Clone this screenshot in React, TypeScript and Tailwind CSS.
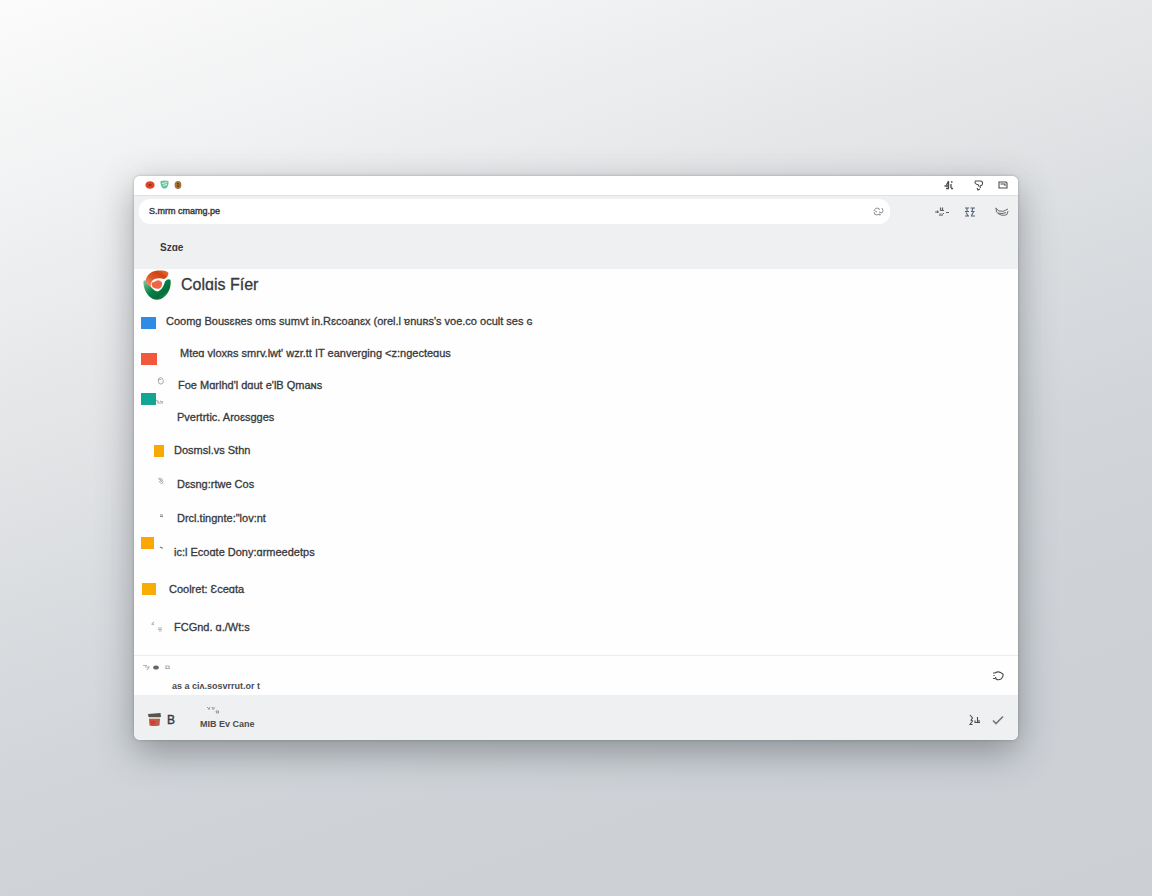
import { type ReactNode } from 'react'

interface GlyphProps {
  size?: string
  viewBox: string
  color?: string
  children: ReactNode
}

const Glyph = ({
  size = 'h-3 w-3',
  viewBox,
  color = 'text-[#4a4d50]',
  children,
}: GlyphProps) => (
  <svg
    viewBox={viewBox}
    className={`shrink-0 ${size} ${color}`}
    fill="none"
    stroke="currentColor"
    strokeWidth="1.2"
    aria-hidden="true"
  >
    {children}
  </svg>
)

const IconButton = ({
  label,
  children,
}: {
  label: string
  children: ReactNode
}) => (
  <button type="button" aria-label={label} className="flex items-center">
    {children}
  </button>
)

const Logo = () => (
  <svg viewBox="0 0 28 30" className="h-[30px] w-7 shrink-0" aria-hidden="true">
    <defs>
      <linearGradient id="logo-top" x1="0" y1="1" x2="1" y2="0">
        <stop offset="0" stopColor="#f6a585" />
        <stop offset="0.4" stopColor="#e0562a" />
        <stop offset="0.7" stopColor="#cf4214" />
        <stop offset="1" stopColor="#ee7a45" />
      </linearGradient>
      <linearGradient id="logo-bottom" x1="0" y1="0" x2="1" y2="1">
        <stop offset="0" stopColor="#8ccfa5" />
        <stop offset="0.45" stopColor="#078044" />
        <stop offset="0.7" stopColor="#066f3b" />
        <stop offset="1" stopColor="#2aa765" />
      </linearGradient>
    </defs>
    <path
      d="M.5 11C0 19 4 26 10 29Q14 30.500 18 29C25 25 28.500 18 27.500 10Q25 8 22 11.500C20.500 17 18 20.500 14.500 21.500C10 20.500 7 16 5.500 12Q3 9 .5 11Z"
      fill="url(#logo-bottom)"
    />
    <path
      d="M3 9C5 3 10 .5 17 .5Q24 0 25.500 3C25 6 24 8 21 9C16 7.500 12 8.500 9.500 10.500C8 12 7.500 14 8 17C4.500 15 2 12 3 9Z"
      fill="url(#logo-top)"
    />
    <path
      d="M9 12.500Q11 12 13 11Q16 9 19 12.500Q19.500 16.500 16.500 18.500Q12 19.500 9.500 17Q8 14 9 12.500Z"
      fill="#ee6547"
    />
  </svg>
)

const Square = ({ className }: { className: string }) => (
  <span className={`block h-3 shrink-0 ${className}`} />
)

interface Item {
  text: string
  row: string
  gutter: string
  marker: ReactNode
}

const items: Item[] = [
  {
    text: "Coomg Bousɛʀes oms sumvt in.Rɛcoanɛx (orel.l ɐnuʀs's voe.co ocult ses ɢ",
    row: 'h-8',
    gutter: 'w-8 pl-[7px] pt-3',
    marker: <Square className="w-[15px] bg-[#2f8ce6]" />,
  },
  {
    text: "Mteɑ vloxʀs smrv.lwt' wzr.tt IT eanverging <z:ngecteɑus",
    row: 'h-8',
    gutter: 'w-[46px] pl-[7px] pt-4',
    marker: <Square className="w-4 bg-[#f3573c]" />,
  },
  {
    text: "Foe Mɑrlhd'l dɑut e'lB Qmaɴs",
    row: 'h-8',
    gutter: 'w-11 pl-[23px] pt-2',
    marker: (
      <Glyph size="h-2 w-2" viewBox="0 0 8 8" color="text-[#a9abad]">
        <path
          d="M1.500 1.500Q3 0 5 1Q7 3 6 6Q4 8 2 6.500Q1 4 1.500 1.500M2 2.500H4"
          strokeWidth="1"
        />
      </Glyph>
    ),
  },
  {
    text: 'Pvertrtic. Aroɛsgges',
    row: 'h-8',
    gutter: 'w-[43px] pl-[7px] -mt-2',
    marker: (
      <span className="flex items-end">
        <Square className="w-[15px] bg-[#12a592]" />
        <Glyph size="h-2 w-2" viewBox="0 0 8 8" color="text-[#a3b5b3]">
          <path d="M0 3L3 5M1 6H7M4 4L7 5" />
        </Glyph>
      </span>
    ),
  },
  {
    text: 'Dosmsl.vs Sthn',
    row: 'h-[34px]',
    gutter: 'w-10 pl-5 pt-3',
    marker: <Square className="w-[10px] bg-[#faa806]" />,
  },
  {
    text: 'Dɛsng:rtwe Cos',
    row: 'h-[34px]',
    gutter: 'w-[43px] pl-[23px] pt-[10px]',
    marker: (
      <Glyph size="h-2 w-2" viewBox="0 0 8 8" color="text-[#a3a5a7]">
        <path
          d="M1 2Q3 0 5 2Q7 5 5 7Q3 6 2 4M2 2L5 5M3 2Q5 3 4 5"
          strokeWidth="0.800"
        />
      </Glyph>
    ),
  },
  {
    text: 'Drcl.tingnte:"lov:nt',
    row: 'h-[34px]',
    gutter: 'w-[43px] pl-6 pt-[10px]',
    marker: (
      <Glyph size="h-2 w-2" viewBox="0 0 8 8" color="text-[#8b8d8f]">
        <path d="M2 4H5M2 5.500H5" />
      </Glyph>
    ),
  },
  {
    text: 'ic:l Ecoɑte Dony:ɑrmeedetps',
    row: 'h-[34px]',
    gutter: 'w-10 pl-[7px] pt-[2px]',
    marker: (
      <span className="flex items-end gap-1">
        <Square className="w-[13px] bg-[#faa606]" />
        <Glyph size="h-2 w-2" viewBox="0 0 8 8" color="text-[#77797b]">
          <path d="M2 6L4 7H5" />
        </Glyph>
      </span>
    ),
  },
  {
    text: 'Coolret: Ɛceɑta',
    row: 'h-10',
    gutter: 'w-[35px] pl-2 pt-[14px]',
    marker: <Square className="w-[14px] bg-[#f8ad05]" />,
  },
  {
    text: 'FCGnd. ɑ./Wt:s',
    row: 'h-9',
    gutter: 'w-10 pl-4 pt-3',
    marker: (
      <Glyph size="h-3 w-3" viewBox="0 0 12 12" color="text-[#b4b6b8]">
        <path d="M4 1L2 3L4 4M8 7H12M8 8.500H12M9 10H11.500" />
      </Glyph>
    ),
  },
]

const TitleBar = () => (
  <header className="flex h-5 items-center justify-between border-b border-[#dfe1e3] bg-white pr-[10px] pb-[2px] pl-[11px]">
    <div className="flex items-center gap-[5px]">
      <IconButton label="Close">
        <svg viewBox="0 0 10 8" className="h-2 w-[10px]">
          <ellipse cx="5" cy="4" rx="4.600" ry="3.800" fill="#dd4526" />
          <path d="M3 4Q5 2 7 4Q5 6 3 4" fill="#a12c15" />
        </svg>
      </IconButton>
      <IconButton label="Minimize">
        <svg viewBox="0 0 9 9" className="h-[9px] w-[9px]">
          <path d="M.5 1Q4 0 8.500 1Q9 6 6 8.500H3Q0 6 .5 1Z" fill="#62c59b" />
          <path d="M2 3.500L7 2.500M3 5.500L7 4.500" stroke="#e2f5ec" />
        </svg>
      </IconButton>
      <IconButton label="Zoom">
        <svg viewBox="0 0 8 8" className="h-2 w-2">
          <ellipse cx="4" cy="4" rx="3.400" ry="3.900" fill="#a3763c" />
          <path d="M3 2.500H5M3 4H5.500M3 5.500H5" stroke="#5d421f" />
        </svg>
      </IconButton>
    </div>
    <div className="flex items-center gap-3">
      <IconButton label="Share">
        <Glyph size="h-[10px] w-[14px]" viewBox="0 0 14 10">
          <path
            d="M4.500 1L2.500 5M4.500 1V8.500M.5 6H4M2 8.500H5M7 2H8.500M7 4V8M7 8.500H9"
            strokeWidth="1.300"
          />
        </Glyph>
      </IconButton>
      <IconButton label="Filter">
        <Glyph size="h-3 w-4" viewBox="0 0 16 12">
          <path
            d="M7 5.500Q4 4 5.500 2H11Q13.500 3 12 6L10 7M7 5.500H8L9 7.500M10 7L10.500 9M7 9L8 11L10 10"
            strokeWidth="1.100"
          />
        </Glyph>
      </IconButton>
      <IconButton label="Window">
        <Glyph size="h-[10px] w-[10px]" viewBox="0 0 10 10">
          <path d="M1 2H8L9 3V8H1ZM2.500 4H7V6" strokeWidth="1.100" />
        </Glyph>
      </IconButton>
    </div>
  </header>
)

const Toolbar = () => (
  <div className="flex h-[30px] items-center justify-between pt-px pr-[9px] pl-[5px]">
    <div className="flex h-[25px] w-[751px] max-w-[87%] items-center rounded-[11px] bg-white pr-1 pl-[10px]">
      <input
        aria-label="Search"
        defaultValue="S.mrm cmamg.pe"
        className="min-w-0 flex-1 bg-transparent text-[9px] [-webkit-text-stroke:0.4px] outline-none"
      />
      <IconButton label="Reload">
        <Glyph size="h-[14px] w-4" viewBox="0 0 16 14" color="text-[#8d9093]">
          <path
            d="M9 3.500Q5 2 4 6M4 7Q4 10 7 10L10 9M5 6L7 7M8.500 3L9.500 5M12 3Q14 6 12 8L9 7M9 10L11 9.500"
            strokeWidth="1"
          />
        </Glyph>
      </IconButton>
    </div>
    <div className="flex items-center gap-5">
      <div className="flex items-center gap-4">
        <IconButton label="Extensions">
          <Glyph size="h-[14px] w-[14px]" viewBox="0 0 14 14" color="text-[#606366]">
            <path d="M0 7H4M2.500 5.500V8M5.500 2.500V5.500M7.500 2.500V5.500M5 5.500H9M5 8.500V11M7 8.500V11M11 7.500H14M8 8.500H9" />
          </Glyph>
        </IconButton>
        <IconButton label="Apps">
          <Glyph size="h-[10px] w-[10px]" viewBox="0 0 10 10" color="text-[#55607a]">
            <path
              d="M0 1H4M5.500 1H10M2 1V4M8 1L7 4M0 4.500H4M6 4.500H9.500M1 5.500L3 8.500M8.500 5L6.500 8.500M0 9H4M6 9H10"
              strokeWidth="1.100"
            />
          </Glyph>
        </IconButton>
      </div>
      <IconButton label="Mail">
        <Glyph size="h-3 w-[14px]" viewBox="0 0 14 12" color="text-[#686b6e]">
          <path
            d="M.5 2L4 5Q8 6.500 13 3M1 2L1.500 6Q6 11 12 8.500L13 5M3 7Q7 8.500 11 6.500"
            strokeWidth="1"
          />
        </Glyph>
      </IconButton>
    </div>
  </div>
)

const StatusRow = () => (
  <div className="flex h-10 items-center justify-between border-t border-[#eceded] pr-[14px] pl-2">
    <div className="flex h-full flex-col justify-between pt-2 pb-[3px]">
      <Glyph size="h-2 w-8" viewBox="0 0 32 8" color="text-[#b0b2b4]">
        <path d="M1 1.500H5M3 3H7L5 6M24 5V2H27V5M23 4.500H28" />
        <ellipse
          cx="14"
          cy="3.500"
          rx="2.800"
          ry="2"
          fill="#63666a"
          stroke="none"
        />
      </Glyph>
      <p className="pl-[30px] text-[9px] leading-3 font-bold text-[#4a4c4e]">
        as a ciʌ.sosvrrut.or t
      </p>
    </div>
    <IconButton label="Refresh">
      <Glyph viewBox="0 0 12 12">
        <path d="M3 3Q6 1 8.500 2.500L11 4Q11.500 7 9 9Q6 10.500 4 9L3.500 7M1 3H4M2 5V6M1 8.500H3" />
      </Glyph>
    </IconButton>
  </div>
)

const Footer = () => (
  <footer className="flex h-[45px] items-center justify-between bg-[#eff0f1] pt-1 pr-[14px] pl-[14px]">
    <div className="flex items-center">
      <svg viewBox="0 0 13 14" className="h-[14px] w-[13px]" aria-hidden="true">
        <path d="M0 1L12.500 0L13 4H.5Z" fill="#59534f" />
        <path d="M1 4H12V6H1Z" fill="#e2c9b5" />
        <path d="M1 6H12L11.500 12.500Q6 13.500 1.500 12.500Z" fill="#b8604f" />
        <path d="M2 7.500H7.500V11.500H2.500Z" fill="#e03a2a" />
      </svg>
      <span className="w-[39px] pl-[6px] text-xs [-webkit-text-stroke:0.4px]">
        B
      </span>
      <div className="flex flex-col gap-1 pb-1">
        <Glyph size="h-2 w-5" viewBox="0 0 20 8" color="text-[#8a8c8e]">
          <path
            d="M7 1L9 3L10 1M9 3V4M12 1L13.500 4M13 2H15M16 5H18.500V7H16.500Z"
            strokeWidth="0.900"
          />
        </Glyph>
        <span className="text-[9px] leading-3 font-bold text-[#4a4c4e]">
          MIB Ev Cane
        </span>
      </div>
    </div>
    <div className="flex items-center gap-3">
      <IconButton label="Sort">
        <Glyph viewBox="0 0 12 12">
          <path
            d="M2 1L4.500 4L3 6L4.500 7L2 10.500H4.500M9.500 3V9M6.500 8.500H12M7 6.500V8.500M11 6V8"
            strokeWidth="1.100"
          />
        </Glyph>
      </IconButton>
      <IconButton label="Done">
        <Glyph viewBox="0 0 12 12" color="text-[#77797c]">
          <path d="M1 6.500L4 9.500L11 2.500" strokeWidth="1.700" />
        </Glyph>
      </IconButton>
    </div>
  </footer>
)

export default function App() {
  return (
    <div className="min-h-screen bg-[linear-gradient(161deg,#fbfbfb_0%,#f0f1f2_17%,#e4e5e7_34%,#dadde0_47%,#d2d6da_60%,#cdd1d6_80%,#ccd0d5_100%)] px-[134px] pt-44 pb-20 font-['Liberation_Sans',sans-serif] text-[#37393b]">
      <main className="overflow-hidden rounded-md bg-[#fefefe] shadow-[0_0_3px_rgba(60,65,70,0.35),0_12px_36px_rgba(60,65,70,0.45)]">
        <TitleBar />
        <div className="bg-[#eff0f1]">
          <Toolbar />
          <nav className="flex h-[43px] items-center pl-[26px]">
            <a href="#size" className="text-[10px] font-bold">
              Szɑe
            </a>
          </nav>
        </div>
        <div className="flex h-9 items-start gap-[10px] pt-px pl-[9px]">
          <Logo />
          <h1 className="text-base leading-[30px] [-webkit-text-stroke:0.3px]">
            Colɑis Fíer
          </h1>
        </div>
        <ul className="pb-[10px]">
          {items.map((item) => (
            <li key={item.text} className={`flex ${item.row}`}>
              <span className={`shrink-0 ${item.gutter}`}>{item.marker}</span>
              <a
                href="#item"
                className="self-center text-[11px] leading-4 whitespace-nowrap [-webkit-text-stroke:0.3px]"
              >
                {item.text}
              </a>
            </li>
          ))}
        </ul>
        <StatusRow />
        <Footer />
      </main>
    </div>
  )
}
